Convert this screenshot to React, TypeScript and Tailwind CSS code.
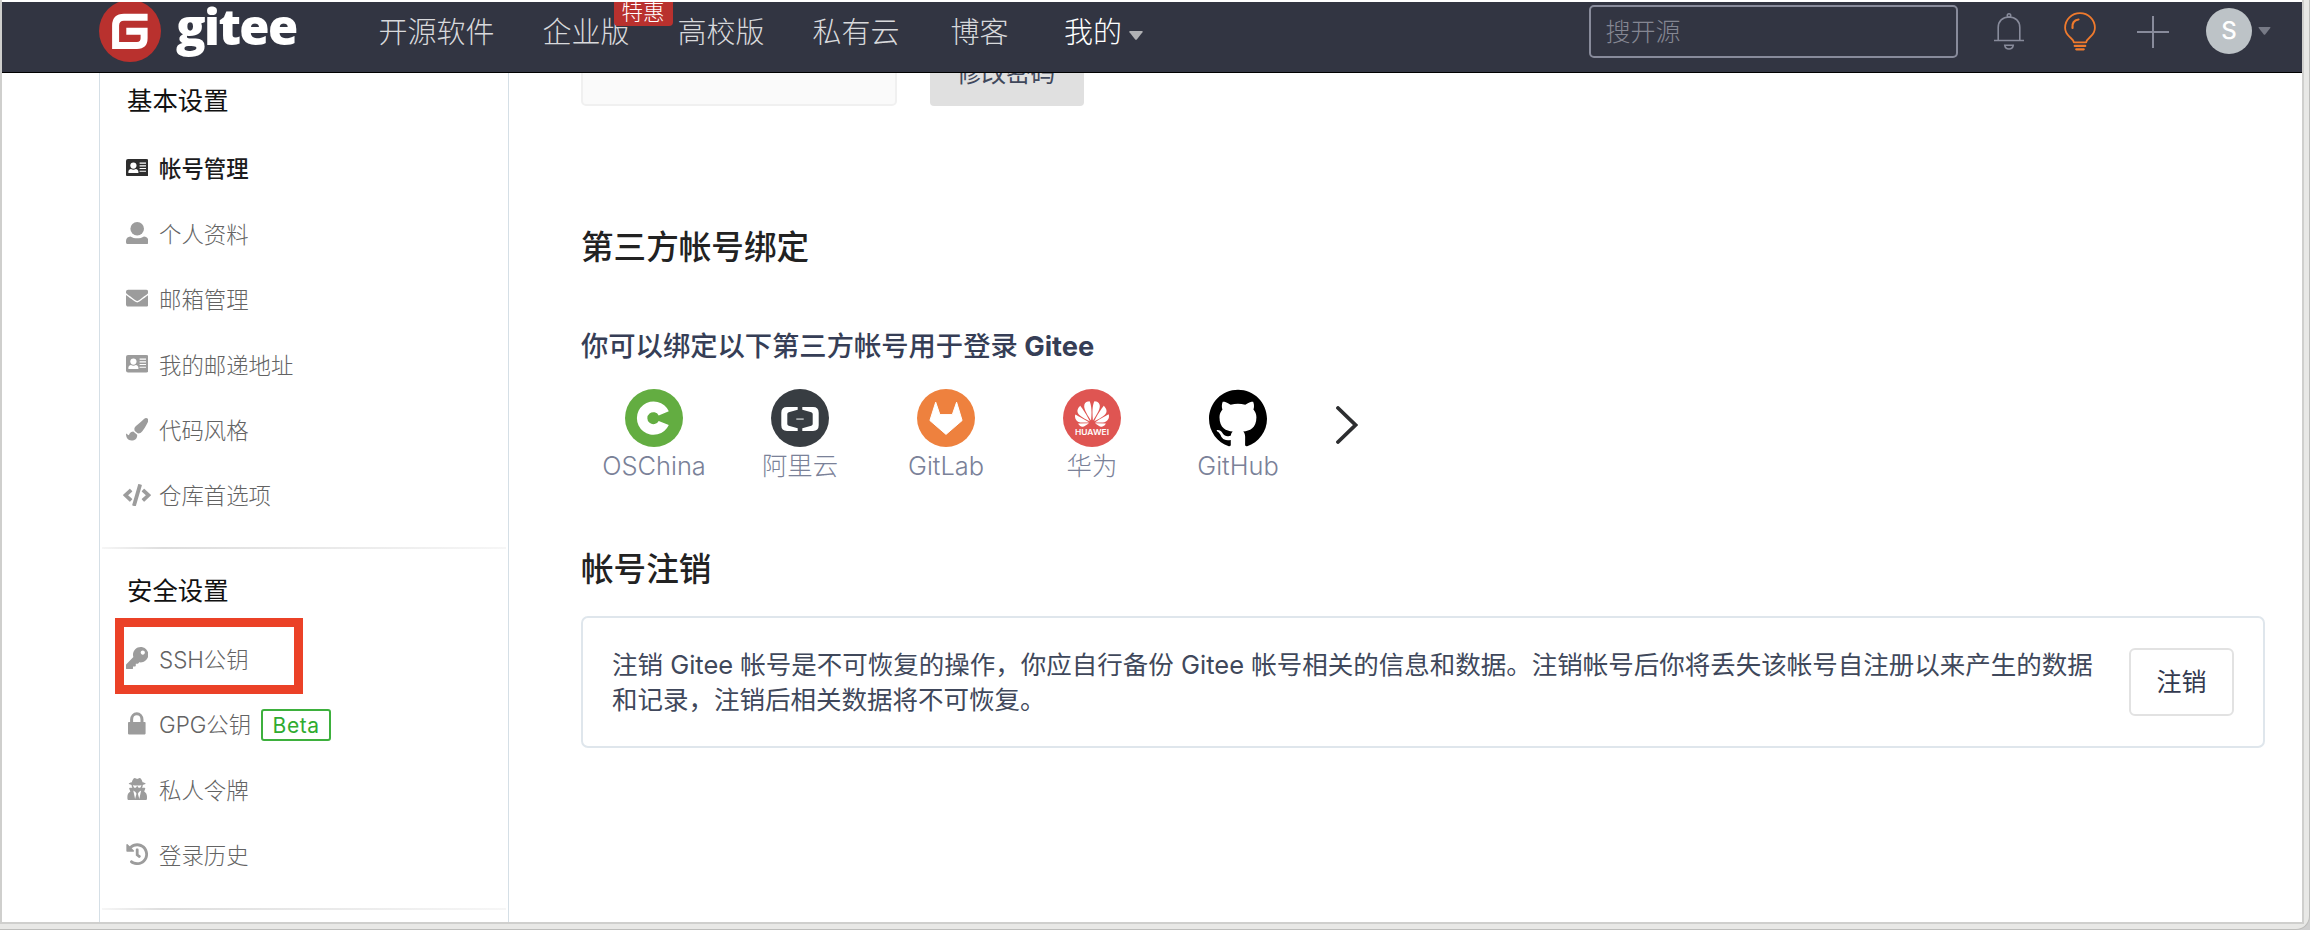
import type { ReactNode } from "react";
import { FaCode, FaEnvelope, FaHistory, FaKey, FaPaintBrush, FaUserSecret } from "react-icons/fa";
import { SiGithub, SiHuawei } from "react-icons/si";

type MenuItem = {
    label: string;
    icon: ReactNode;
    active?: boolean;
    beta?: boolean;
    marked?: boolean;
};

type Provider = {
    name: string;
    logo: ReactNode;
};

function CardIcon() {
    return (
        <svg viewBox="0 0 22.4 17.4" className="w-[22.4px]">
            <rect width="22.4" height="17.4" rx="2" fill="currentColor" />
            <g fill="#fff">
                <circle cx="7.4" cy="6.6" r="3.1" />
                <path d="M2.4 14v-1.4c0-1.5 1-2.4 2.6-2.7 1.4 1 3.4 1 4.8 0 1.6.3 2.6 1.2 2.6 2.7V14z" />
                <path d="M13.6 3.6h6.4v1.1h-6.4zM13.6 6.3h6.4v1.1h-6.4zM13.6 9h6.4v1.1h-6.4zM13.6 11.7h6.4v1.1h-6.4z" />
            </g>
        </svg>
    );
}

function UserIcon() {
    return (
        <svg viewBox="0 0 22.4 22.4" className="w-[22.4px]" fill="currentColor">
            <circle cx="11.2" cy="6.8" r="6.8" />
            <path d="M4.4 14.4c4 2.6 9.6 2.6 13.6 0 2.600.2 4.400 1.800 4.400 4.600v1.200c0 1.300-.9 2.200-2.200 2.200H2.200C.9 22.400 0 21.500 0 20.200V19c0-2.800 1.800-4.400 4.400-4.600z" />
        </svg>
    );
}

function LockIcon() {
    return (
        <svg viewBox="0 0 17.6 22.4" className="w-[17.6px]">
            <path d="M3.6 11V7.600a5.200 5.800 0 0 1 10.400 0V11" fill="none" stroke="currentColor" strokeWidth="3" />
            <rect y="10" width="17.6" height="12.4" rx=".8" fill="currentColor" />
        </svg>
    );
}

const basicMenu: MenuItem[] = [
    { label: "帐号管理", icon: <CardIcon />, active: true },
    { label: "个人资料", icon: <UserIcon /> },
    { label: "邮箱管理", icon: <FaEnvelope size={22.4} /> },
    { label: "我的邮递地址", icon: <CardIcon /> },
    { label: "代码风格", icon: <FaPaintBrush size={22.4} /> },
    { label: "仓库首选项", icon: <FaCode className="h-[22.4px] w-[28px]" /> },
];

const securityMenu: MenuItem[] = [
    { label: "SSH公钥", icon: <FaKey size={22.4} />, marked: true },
    { label: "GPG公钥", icon: <LockIcon />, beta: true },
    { label: "私人令牌", icon: <FaUserSecret size={22.4} /> },
    { label: "登录历史", icon: <FaHistory size={22.4} /> },
];

const providers: Provider[] = [
    {
        name: "OSChina",
        logo: (
            <svg viewBox="0 0 58 58" className="size-[58px]">
                <circle cx="29" cy="29" r="29" fill="#63ad41" />
                <path d="M43.8 22.2A16.7 16.7 0 1 0 43.8 36L33.7 31.9A6 6 0 1 1 33.7 26.5Z" fill="#fff" />
            </svg>
        ),
    },
    {
        name: "阿里云",
        logo: (
            <svg viewBox="0 0 58 58" className="size-[58px]">
                <circle cx="29" cy="29" r="29" fill="#383d42" />
                <g fill="#fff">
                    <path d="M26.7 18H16Q10.3 18 10.3 23.7V36.3Q10.3 42 16 42H26.7V39.3L17.7 36.7Q16.3 36.3 16.3 35V25Q16.3 23.7 17.7 23.3L26.7 20.7Z" />
                    <path d="M31.3 18H42Q47.7 18 47.7 23.7V36.3Q47.7 42 42 42H31.3V39.3L40.3 36.7Q41.7 36.3 41.7 35V25Q41.7 23.7 40.3 23.3L31.3 20.7Z" />
                </g>
                <rect x="25.3" y="29.3" width="7.4" height="1.6" fill="#b4b7b9" />
            </svg>
        ),
    },
    {
        name: "GitLab",
        logo: (
            <svg viewBox="0 0 58 58" className="size-[58px]">
                <circle cx="29" cy="29" r="29" fill="#ee813e" />
                <path
                    d="M18.7 13.2L12.9 31.5L29 45.4L45.1 31.5L39.6 13.2L35.3 25.6H22.9Z"
                    fill="#fff"
                    stroke="#fff"
                    strokeLinejoin="round"
                />
            </svg>
        ),
    },
    {
        name: "华为",
        logo: (
            <div className="flex size-[58px] flex-col items-center overflow-hidden rounded-full bg-[#df5552] pt-[8px] text-white">
                <SiHuawei size={34} />
                <svg viewBox="0 0 34 8" className="-mt-[3px] h-2 w-[34px] shrink-0">
                    <text
                        x="0"
                        y="7"
                        textLength="34"
                        lengthAdjust="spacingAndGlyphs"
                        fill="#fff"
                        className="font-[Inter] text-[8px] font-semibold"
                    >
                        HUAWEI
                    </text>
                </svg>
            </div>
        ),
    },
    { name: "GitHub", logo: <SiGithub size={58} className="text-black" /> },
];

function Logo() {
    return (
        <div className="-mt-[2px] ml-[97px] flex w-[279.5px] shrink-0 items-start">
            <svg viewBox="0 0 62 62" className="size-[62px] shrink-0">
                <circle cx="31" cy="31" r="31" fill="#b9312e" />
                <path
                    d="M48.6 17.2H25Q16.6 17.2 16.6 25.6V45.4H38Q45.1 45.4 45.1 38.3V31.2H27.3"
                    fill="none"
                    stroke="#fff"
                    strokeWidth="7"
                />
            </svg>
            <span className="ml-[15px] font-['Open_Sans'] text-[49px] leading-[52px] font-extrabold tracking-[-1.6px] text-white">
                gitee
            </span>
        </div>
    );
}

function Caret({ className }: { className?: string }) {
    return (
        <svg viewBox="0 0 14 9" className={className} fill="currentColor">
            <path d="M1 0h12q1.2.2.5 1.2L7.8 8.4q-.8.9-1.6 0L.5 1.2Q-.2.2 1 0z" />
        </svg>
    );
}

function Header() {
    return (
        <header className="flex h-[71px] items-start overflow-hidden border-b border-black bg-[#323542]">
            <Logo />
            <nav className="flex text-[29px] leading-[62px] font-light whitespace-nowrap text-[#d8d9dc]">
                <span>开源软件</span>
                <span className="relative ml-[48px]">
                    企业版
                    <span className="absolute top-0 left-[71px] h-[24px] w-[59px] rounded-b-[4px] bg-[#b9312e] text-center text-[21.5px] leading-[20px] text-white">
                        特惠
                    </span>
                </span>
                <span className="ml-[48px]">高校版</span>
                <span className="ml-[48px]">私有云</span>
                <span className="ml-[51px]">博客</span>
                <span className="ml-[55.5px] flex text-white">
                    我的
                    <Caret className="mt-[29px] ml-[7px] h-[9px] w-[14px] text-[#b0b1b4]" />
                </span>
            </nav>
            <div className="ml-auto flex">
                <div className="mt-[3px] h-[53px] w-[369px] rounded-[5px] border-2 border-[#888b9b] pl-[15px] text-[25px] leading-[50px] font-light text-[#858793]">
                    搜开源
                </div>
                <svg
                    viewBox="0 0 30 37"
                    className="mt-[11px] ml-[36px] h-[37px] w-[30px]"
                    fill="none"
                    stroke="#888b9b"
                    strokeWidth="1.6"
                >
                    <path d="M0 27.5H30M4.2 27.5V14.5C4.2 8 8.5 4 15 4S25.8 8 25.8 14.5V27.5" />
                    <circle cx="15" cy="2.5" r="1.7" />
                    <path d="M10.8 32.3H19.2C18.8 34.8 17.2 36 15 36S11.2 34.8 10.8 32.3Z" />
                </svg>
                <svg
                    viewBox="0 0 32 39"
                    className="mt-[10px] ml-[40px] h-[39px] w-[32px]"
                    fill="none"
                    stroke="#ef7a2d"
                    strokeWidth="1.8"
                    strokeLinecap="round"
                    strokeLinejoin="round"
                >
                    <path d="M9.8 30.3C9.3 27.8 7.6 26.6 5.6 24.8C2.600 22.2 1.100 19 1.100 15.800C1.100 7.500 7.800 1.100 16 1.100S30.900 7.500 30.900 15.800C30.900 19 29.400 22.200 26.400 24.800C24.400 26.600 22.700 27.800 22.200 30.300Z" />
                    <path d="M8.5 16C8 11 10.5 8 14.5 7.500" strokeWidth="2.200" />
                    <path d="M10.8 33.9H21.2M12.3 37.300H19.700" strokeWidth="2.300" />
                </svg>
                <svg viewBox="0 0 32 32" className="mt-[14px] ml-[41px] size-[32px]" stroke="#888b9b" strokeWidth="2">
                    <path d="M0 16H32M16 0V32" />
                </svg>
                <div className="mt-[6px] ml-[37.5px] size-[46px] rounded-full bg-[#bdc3c7] text-center text-[24px] leading-[46px] font-medium text-white">
                    S
                </div>
                <Caret className="mt-[25px] mr-[31px] ml-[6px] h-[8px] w-[13px] text-[#777a86]" />
            </div>
        </header>
    );
}

function MenuSection({ title, items }: { title: string; items: MenuItem[] }) {
    return (
        <section>
            <h3 className="h-[56px] pl-[27px] text-[25.4px] leading-[56px] text-[#111]">{title}</h3>
            <ul className="mt-[7.6px]">
                {items.map((item) => (
                    <li
                        key={item.label}
                        className={
                            item.active
                                ? "relative flex h-[65.4px] items-center pl-[22px] font-medium text-[#1c1c1e]"
                                : "relative flex h-[65.4px] items-center pl-[22px] font-light text-[#636363]"
                        }
                    >
                        <span
                            className={
                                item.active
                                    ? "-mt-[3px] flex w-[30px] justify-center text-[#2e2e2e]"
                                    : "-mt-[3px] flex w-[30px] justify-center text-[#9c9c9c]"
                            }
                        >
                            {item.icon}
                        </span>
                        <span className="ml-[7px] text-[22.4px]">{item.label}</span>
                        {item.beta && (
                            <span className="ml-[10px] h-[32px] w-[70px] rounded-[3px] border-2 border-[#3db03d] text-center text-[21px] leading-[29px] font-normal tracking-[.6px] text-[#2fab2f]">
                                Beta
                            </span>
                        )}
                        {item.marked && (
                            <span className="absolute top-[-9px] left-[15px] h-[76px] w-[188px] border-[9px] border-[#eb4127]" />
                        )}
                    </li>
                ))}
            </ul>
        </section>
    );
}

function Divider({ className }: { className: string }) {
    return (
        <div className={className}>
            <div className="mx-[2px] h-[2px] bg-linear-to-r from-[#f6f6f6] via-[#dedede] via-15% to-[#f6f6f6]" />
        </div>
    );
}

function Sidebar() {
    return (
        <aside className="ml-[97px] w-[410px] shrink-0 border-x border-[#d5dfe6]">
            <MenuSection title="基本设置" items={basicMenu} />
            <Divider className="pt-[18.4px] pb-[14px]" />
            <MenuSection title="安全设置" items={securityMenu} />
            <Divider className="pt-[20px]" />
        </aside>
    );
}

export default function App() {
    return (
        <div className="flex h-[930px] w-[2310px] flex-col overflow-hidden bg-[#cfcfcf] font-[Inter,'Noto_Sans_CJK_SC',sans-serif]">
            <div className="h-[930px] overflow-hidden rounded-br-[14px] border-r border-b border-[#bdbdbb] bg-[#e8e8e6]">
                <div className="h-[924px] w-[2304px] overflow-hidden border-r-2 border-b-2 border-l-2 border-[#cfcfcd] bg-white pt-[2px]">
                    <Header />
                    <div className="flex h-[849px]">
                        <Sidebar />
                        <main className="ml-[72px] w-[1684px] shrink-0">
                            <div className="flex h-[33px] overflow-hidden">
                                <div className="-mt-[10px] h-[43px] w-[316px] rounded-[5px] border-2 border-[#f0f0f0] bg-[#fafafa]" />
                                <div className="-mt-[31px] ml-[33px] h-[64px] w-[154px] rounded-[4px] bg-[#e0e0e0] pr-[2px] text-center text-[24.6px] leading-[62px] text-[#40485b]">
                                    修改密码
                                </div>
                            </div>

                            <h2 className="mt-[116px] text-[32.6px] leading-[50px] font-medium text-[#222]">第三方帐号绑定</h2>
                            <h4 className="mt-[53px] text-[27.3px] leading-[43px] font-medium text-[#363e56]">
                                你可以绑定以下第三方帐号用于登录<span className="font-bold"> Gitee</span>
                            </h4>

                            <div className="mt-[21px] flex h-[98px]">
                                {providers.map((provider) => (
                                    <div key={provider.name} className="flex w-[146px] flex-col items-center">
                                        {provider.logo}
                                        <span className="mt-[2px] text-[25.4px] leading-[34px] font-light text-[#7a8198]">
                                            {provider.name}
                                        </span>
                                    </div>
                                ))}
                                <svg
                                    viewBox="0 0 22 38"
                                    className="mt-[17px] ml-[25px] h-[38px] w-[22px]"
                                    fill="none"
                                    stroke="#2d2e30"
                                    strokeWidth="3.8"
                                    strokeLinecap="round"
                                >
                                    <path d="M2 2L19.5 19L2 36" />
                                </svg>
                            </div>

                            <h2 className="mt-[57px] text-[32.6px] leading-[50px] font-medium text-[#222]">帐号注销</h2>
                            <div className="mt-[22px] flex h-[132px] items-center rounded-[7px] border-2 border-[#dfe6ec] pr-[29px] pl-[29px]">
                                <p className="w-[1500px] text-[25.5px] leading-[35px] whitespace-nowrap text-[#40485b]">
                                    注销 Gitee 帐号是不可恢复的操作，你应自行备份 Gitee
                                    帐号相关的信息和数据。注销帐号后你将丢失该帐号自注册以来产生的数据
                                    <br />
                                    和记录，注销后相关数据将不可恢复。
                                </p>
                                <button className="ml-auto h-[68px] w-[105px] rounded-[6px] border-2 border-[#e2e2e2] pt-[2px] text-[25px] text-[#33394f]">
                                    注销
                                </button>
                            </div>
                        </main>
                    </div>
                </div>
            </div>
        </div>
    );
}
